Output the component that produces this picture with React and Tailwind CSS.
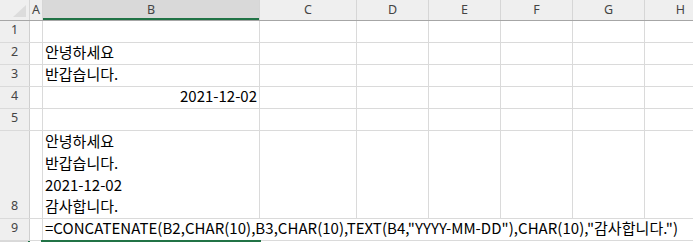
const cols = [
  { key: 'A', w: 'w-[13px]' },
  { key: 'B', w: 'w-[217px]' },
  { key: 'C', w: 'w-[97px]' },
  { key: 'D', w: 'w-[72px]' },
  { key: 'E', w: 'w-[72px]' },
  { key: 'F', w: 'w-[72px]' },
  { key: 'G', w: 'w-[72px]' },
  { key: 'H', w: 'w-[72px]' },
];

const rows = [
  { n: 1, h: 'h-[22px]' },
  { n: 2, h: 'h-[22px]', b: <span>안녕하세요</span> },
  { n: 3, h: 'h-[22px]', b: <span>반갑습니다.</span> },
  { n: 4, h: 'h-[22px]', b: <span className="ml-auto">2021-12-02</span> },
  { n: 5, h: 'h-[22px]' },
  {
    n: 8,
    h: 'h-[88px]',
    b: (
      <div className="flex flex-col leading-[21.75px]">
        <span>안녕하세요</span>
        <span>반갑습니다.</span>
        <span>2021-12-02</span>
        <span>감사합니다.</span>
      </div>
    ),
  },
  {
    n: 9,
    h: 'h-[22px]',
    b: (
      <span className="whitespace-nowrap tracking-[0.04px]">
        =CONCATENATE(B2,CHAR(10),B3,CHAR(10),TEXT(B4,"YYYY-MM-DD"),CHAR(10),"감사합니다.")
      </span>
    ),
    overflow: true,
  },
];

const cellFont = 'font-["Noto_Sans_CJK_KR",sans-serif] text-[15px] text-black';
const headFont = 'font-["Noto_Sans","Noto_Sans_CJK_KR",sans-serif] text-[12.5px] text-[#444]';

export default function App() {
  return (
    <div className="relative w-[693px] h-[242px] overflow-hidden bg-white">
      {/* column headers */}
      <div className="flex h-[21px] bg-[#efefef] border-b border-[#a6a6a6]">
        <div className="w-[30px] shrink-0 border-r border-[#d6d6d6] flex items-end justify-end pr-[3px] pb-[3px]">
          <svg width="13" height="12" viewBox="0 0 13 12">
            <polygon points="13,0 13,12 0,12" fill="#dcdcdc" />
          </svg>
        </div>
        {cols.map((c) => (
          <div
            key={c.key}
            className={`${c.w} shrink-0 border-r border-[#d6d6d6] flex items-center justify-center ${headFont} ${
              c.key === 'B' ? 'bg-[#d9d9d9] text-[#1e6b41] shadow-[inset_0_-2px_0_#217346]' : ''
            }`}
          >
            {c.key}
          </div>
        ))}
      </div>

      {rows.map((r) => (
        <div key={r.n} className={`flex ${r.h} border-b border-[#dadada]`}>
          <div
            className={`w-[30px] shrink-0 bg-[#efefef] border-r border-[#cfcfcf] flex items-end justify-center pb-[2px] ${headFont}`}
          >
            {r.n}
          </div>
          {cols.map((c) => (
            <div
              key={c.key}
              className={`${c.w} shrink-0 ${
                r.overflow && c.key !== 'A' ? '' : 'border-r border-[#dadada]'
              } flex items-end px-[2px] pb-[1px] ${cellFont} ${
                c.key === 'B' && r.overflow ? 'overflow-visible relative z-10' : ''
              }`}
            >
              {c.key === 'B' ? r.b : null}
            </div>
          ))}
        </div>
      ))}

      {/* row 10 */}
      <div className="flex h-[24px]">
        <div className="w-[30px] shrink-0 bg-[#d9d9d9] border-r-2 border-[#217346]" />
      </div>

      {/* selected cell B10 */}
      <div className="absolute top-[240px] left-[41px] w-[220px] h-[20px] border-2 border-[#217346]" />
    </div>
  );
}
